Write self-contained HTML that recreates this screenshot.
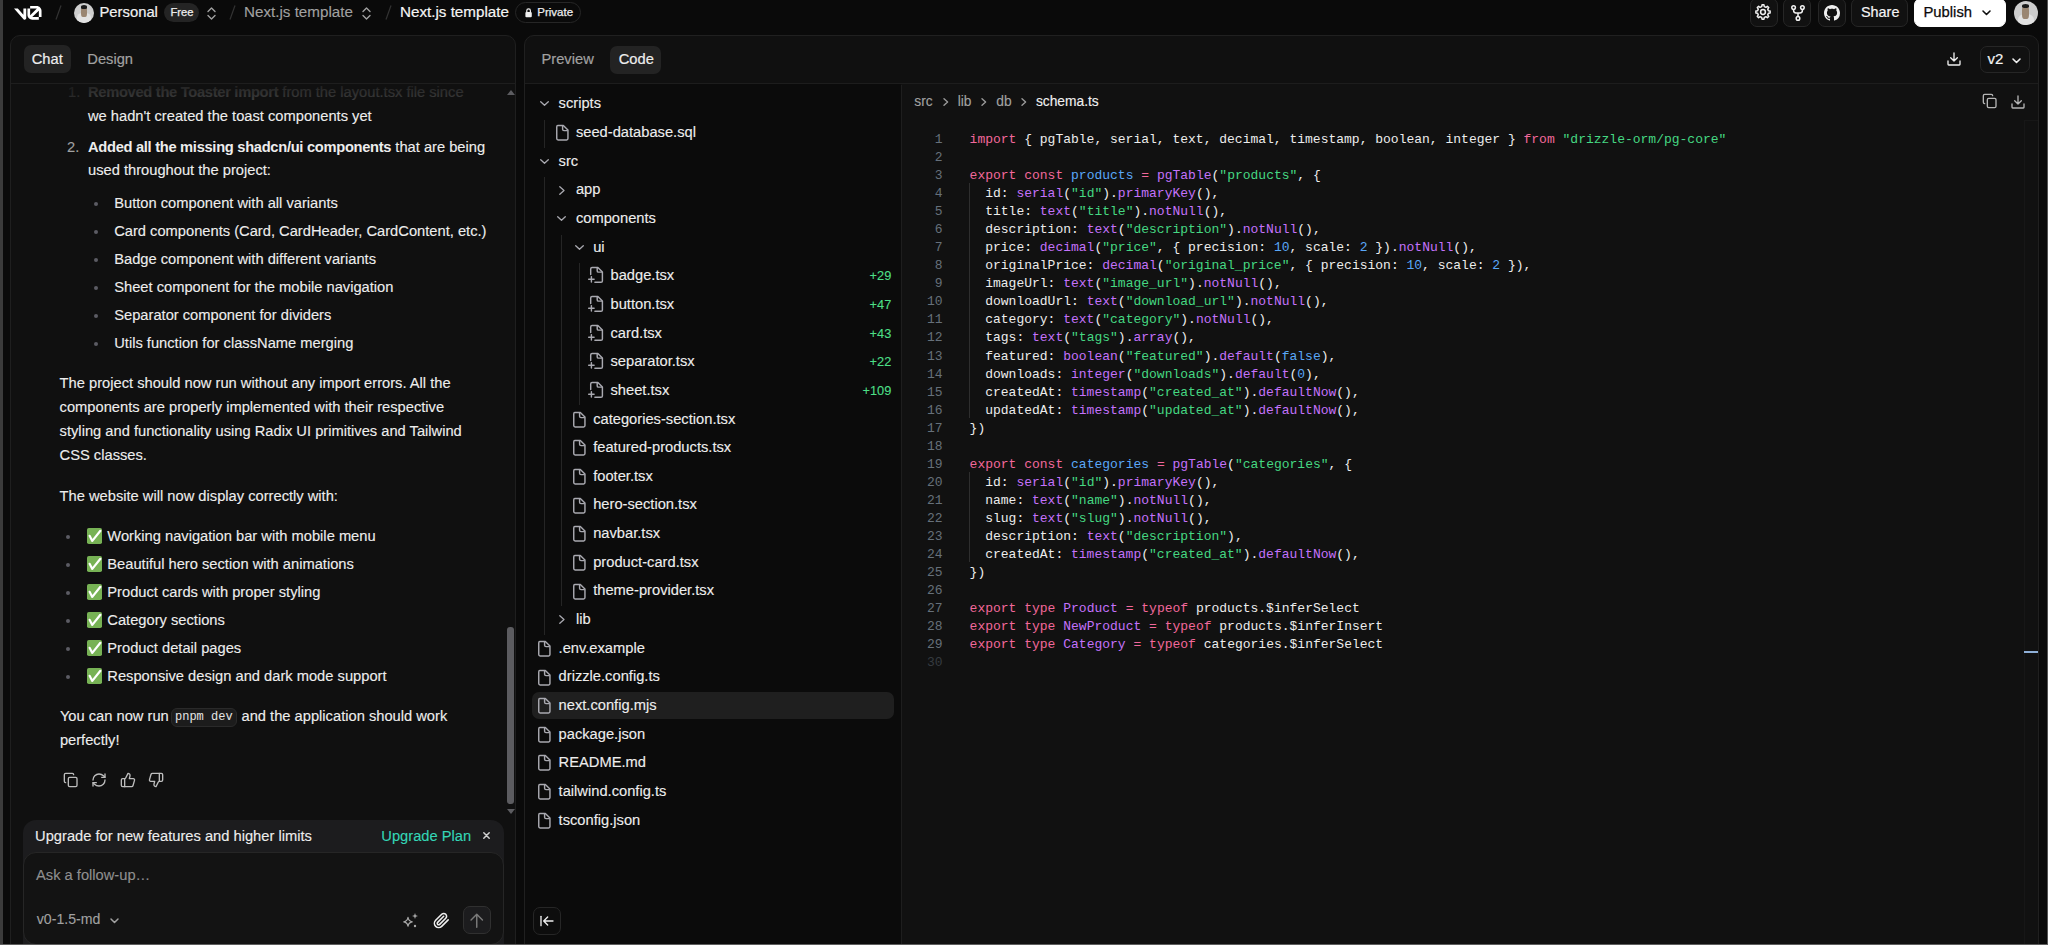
<!DOCTYPE html>
<html><head><meta charset="utf-8">
<style>
*{box-sizing:border-box;margin:0;padding:0}
html,body{width:2048px;height:945px;overflow:hidden;background:#0a0a0a;font-family:"Liberation Sans",sans-serif;color:#ededed}
.a{position:absolute;white-space:pre}
svg{position:absolute;overflow:visible}
b{-webkit-text-stroke:0 !important}
.hb{position:absolute;top:-2px;height:28.5px;border:1px solid #262626;background:#111;border-radius:7px}
</style></head><body>

<svg style="left:14px;top:5.5px;" width="27.6" height="13.8" viewBox="0 0 40 20"><path fill="#fff" d="M23.3919 0H32.9188C36.7819 0 39.9136 3.13165 39.9136 6.99475V16.0805H36.0006V6.99475C36.0006 6.90167 35.9969 6.80925 35.9898 6.71766L26.4628 16.079C26.4949 16.08 26.5272 16.0805 26.5595 16.0805H36.0006V19.7762H26.5595C22.6964 19.7762 19.4788 16.6139 19.4788 12.7508V3.68923H23.3919V12.7508C23.3919 12.9253 23.4054 13.0977 23.4316 13.2668L33.1682 3.6995C33.0861 3.6927 33.003 3.68923 32.9188 3.68923H23.3919V0Z"/><path fill="#fff" d="M13.7688 19.0956L0 3.68759H5.53933L13.6231 12.7337V3.68759H17.7535V17.5746C17.7535 19.6705 15.1654 20.6584 13.7688 19.0956Z"/></svg>
<svg style="left:55px;top:5px;" width="7" height="15" viewBox="0 0 7 15"><path d="M6 0.5 L1 14.5" stroke="#333" stroke-width="1.2"/></svg>
<div class="a" style="left:74px;top:2.5px;width:20px;height:20px;border-radius:50%;overflow:hidden;background:#cdcdcd"><div style="position:absolute;left:3.333333333333333px;top:10.833333333333334px;width:13.333333333333334px;height:11.666666666666668px;border-radius:40% 40% 0 0;background:#e2e2e2"></div><div style="position:absolute;left:7.333333333333333px;top:4.583333333333333px;width:5.333333333333334px;height:10.0px;border-radius:35%;background:#9a8672;filter:blur(0.3px)"></div><div style="position:absolute;left:6.833333333333334px;top:2.5px;width:6.333333333333333px;height:3.5000000000000004px;border-radius:50% 50% 30% 30%;background:#1a1a1a"></div></div>
<div class="a" style="left:99.5px;top:2.3000000000000007px;font-family:'Liberation Sans',sans-serif;font-size:14.8px;line-height:20px;color:#f2f2f2;font-weight:400;letter-spacing:0px;-webkit-text-stroke:0.2px #f2f2f2">Personal</div>
<div class="a" style="left:164px;top:3px;width:35px;height:19px;border-radius:10px;background:#242424"></div>
<div class="a" style="left:170.4px;top:3.5999999999999996px;font-family:'Liberation Sans',sans-serif;font-size:11.2px;line-height:16px;color:#ededed;font-weight:400;letter-spacing:0px;-webkit-text-stroke:0.25px #ededed">Free</div>
<svg style="left:206.5px;top:6.5px;" width="9" height="13" viewBox="0 0 9 13"><path d="M1 4.5 L4.5 1 L8 4.5 M1 8.5 L4.5 12 L8 8.5" stroke="#a1a1a1" stroke-width="1.4" fill="none" stroke-linecap="round" stroke-linejoin="round"/></svg>
<svg style="left:229px;top:5px;" width="7" height="15" viewBox="0 0 7 15"><path d="M6 0.5 L1 14.5" stroke="#333" stroke-width="1.2"/></svg>
<div class="a" style="left:244px;top:1.3000000000000007px;font-family:'Liberation Sans',sans-serif;font-size:15.2px;line-height:21px;color:#a1a1a1;font-weight:400;letter-spacing:0px;;-webkit-text-stroke:0.12px #a1a1a1">Next.js template</div>
<svg style="left:362px;top:6.5px;" width="9" height="13" viewBox="0 0 9 13"><path d="M1 4.5 L4.5 1 L8 4.5 M1 8.5 L4.5 12 L8 8.5" stroke="#a1a1a1" stroke-width="1.4" fill="none" stroke-linecap="round" stroke-linejoin="round"/></svg>
<svg style="left:384.5px;top:5px;" width="7" height="15" viewBox="0 0 7 15"><path d="M6 0.5 L1 14.5" stroke="#333" stroke-width="1.2"/></svg>
<div class="a" style="left:400px;top:1.3000000000000007px;font-family:'Liberation Sans',sans-serif;font-size:15.2px;line-height:21px;color:#f5f5f5;font-weight:400;letter-spacing:0px;-webkit-text-stroke:0.2px #f5f5f5">Next.js template</div>
<div class="a" style="left:515px;top:2px;width:66px;height:21px;border-radius:11px;border:1px solid #262626"></div>
<svg style="left:525px;top:7.8px;" width="7.2" height="9.5" viewBox="0 0 8 11"><path d="M1.9 4.6 V3.2 A2.1 2.1 0 0 1 6.1 3.2 V4.6" stroke="#f0f0f0" stroke-width="1.4" fill="none"/><rect x="0.3" y="4.6" width="7.4" height="6.2" rx="1.2" fill="#f0f0f0"/></svg>
<div class="a" style="left:537.3px;top:3.5999999999999996px;font-family:'Liberation Sans',sans-serif;font-size:11.5px;line-height:16px;color:#ededed;font-weight:400;letter-spacing:0px;-webkit-text-stroke:0.25px #ededed">Private</div>
<div class="hb" style="left:1750px;width:28px"></div>
<svg style="left:1754px;top:3.4px;" width="18" height="18" viewBox="0 0 24 24"><path d="M10.27 4.80 L10.72 2.49 L13.28 2.49 L13.73 4.80 L15.87 5.69 L17.82 4.37 L19.63 6.18 L18.31 8.13 L19.20 10.27 L21.51 10.72 L21.51 13.28 L19.20 13.73 L18.31 15.87 L19.63 17.82 L17.82 19.63 L15.87 18.31 L13.73 19.20 L13.28 21.51 L10.72 21.51 L10.27 19.20 L8.13 18.31 L6.18 19.63 L4.37 17.82 L5.69 15.87 L4.80 13.73 L2.49 13.28 L2.49 10.72 L4.80 10.27 L5.69 8.13 L4.37 6.18 L6.18 4.37 L8.13 5.69Z" stroke="#f0f0f0" stroke-width="2" fill="none" stroke-linejoin="round"/><circle cx="12" cy="12" r="3.2" stroke="#f0f0f0" stroke-width="2" fill="none"/></svg>
<div class="hb" style="left:1783px;width:28px"></div>
<svg style="left:1791px;top:5px;" width="14" height="16" viewBox="0 0 14 16"><circle cx="2.6" cy="2.6" r="1.8" stroke="#f0f0f0" stroke-width="1.5" fill="none"/><circle cx="11.4" cy="2.6" r="1.8" stroke="#f0f0f0" stroke-width="1.5" fill="none"/><circle cx="7" cy="13.4" r="1.8" stroke="#f0f0f0" stroke-width="1.5" fill="none"/><path d="M2.6 4.4 V5.6 Q2.6 8 5 8 H9 Q11.4 8 11.4 5.6 V4.4 M7 8 V11.6" stroke="#f0f0f0" stroke-width="1.5" fill="none"/></svg>
<div class="hb" style="left:1818px;width:28px"></div>
<svg style="left:1824px;top:5px;" width="16" height="16" viewBox="0 0 16 16"><path fill="#f0f0f0" d="M8 0C3.58 0 0 3.58 0 8c0 3.54 2.29 6.53 5.47 7.59.4.07.55-.17.55-.38 0-.19-.01-.82-.01-1.49-2.01.37-2.53-.49-2.69-.94-.09-.23-.48-.94-.82-1.13-.28-.15-.68-.52-.01-.53.63-.01 1.080.58 1.23.82.72 1.21 1.87.87 2.33.66.07-.52.28-.87.51-1.07-1.78-.2-3.64-.89-3.64-3.95 0-.87.31-1.59.82-2.15-.08-.2-.36-1.02.08-2.12 0 0 .67-.21 2.2.82.64-.18 1.32-.27 2-.27.68 0 1.36.09 2 .27 1.53-1.04 2.2-.82 2.2-.82.44 1.1.16 1.92.08 2.12.51.56.82 1.27.82 2.15 0 3.07-1.87 3.75-3.65 3.95.29.25.54.73.54 1.48 0 1.07-.01 1.93-.01 2.2 0 .21.15.46.55.38A8.013 8.013 0 0016 8c0-4.42-3.58-8-8-8z"/></svg>
<div class="hb" style="left:1851px;width:57px"></div>
<div class="a" style="left:1861px;top:2.3000000000000007px;font-family:'Liberation Sans',sans-serif;font-size:14.4px;line-height:20px;color:#f5f5f5;font-weight:400;letter-spacing:0px;-webkit-text-stroke:0.2px #f5f5f5">Share</div>
<div class="hb" style="left:1914px;width:92px;background:#fff;border-color:#fff"></div>
<div class="a" style="left:1923.5px;top:2.3000000000000007px;font-family:'Liberation Sans',sans-serif;font-size:14.8px;line-height:20px;color:#0a0a0a;font-weight:400;letter-spacing:0px;-webkit-text-stroke:0.25px #0a0a0a">Publish</div>
<svg style="left:1982px;top:10px;" width="9" height="6" viewBox="0 0 9 6"><path d="M1 1 L4.5 4.5 L8 1" stroke="#111" stroke-width="1.6" fill="none" stroke-linecap="round" stroke-linejoin="round"/></svg>
<div class="a" style="left:2013.5px;top:0.9000000000000004px;width:24.2px;height:24.2px;border-radius:50%;overflow:hidden;background:#cdcdcd"><div style="position:absolute;left:4.033333333333333px;top:13.108333333333333px;width:16.133333333333333px;height:14.116666666666667px;border-radius:40% 40% 0 0;background:#e2e2e2"></div><div style="position:absolute;left:8.873333333333333px;top:5.545833333333333px;width:6.453333333333333px;height:12.1px;border-radius:35%;background:#9a8672;filter:blur(0.3px)"></div><div style="position:absolute;left:8.268333333333333px;top:3.0250000000000004px;width:7.663333333333333px;height:4.235px;border-radius:50% 50% 30% 30%;background:#1a1a1a"></div></div>
<div class="a" style="left:10px;top:34.5px;width:506px;height:920px;border:1px solid #1f1f1f;border-radius:10px;background:#101010"></div>
<div class="a" style="left:524px;top:34.5px;width:1515px;height:920px;border:1px solid #202020;border-radius:10px;background:#101010"></div>
<div class="a" style="left:23.5px;top:45px;width:47px;height:28px;border-radius:7px;background:#232323"></div>
<div class="a" style="left:31.7px;top:48.9px;font-family:'Liberation Sans',sans-serif;font-size:14.7px;line-height:20px;color:#ededed;font-weight:400;letter-spacing:0px;-webkit-text-stroke:0.2px #ededed">Chat</div>
<div class="a" style="left:87.3px;top:48.9px;font-family:'Liberation Sans',sans-serif;font-size:14.7px;line-height:20px;color:#a1a1a1;font-weight:400;letter-spacing:0px;-webkit-text-stroke:0.2px #a1a1a1">Design</div>
<div class="a" style="left:11px;top:82.5px;width:505px;height:1px;background:#1e1e1e"></div>
<div class="a" style="left:68px;top:81.7px;font-family:'Liberation Sans',sans-serif;font-size:14.7px;line-height:20px;color:#a1a1a1;font-weight:400;letter-spacing:0px;;-webkit-text-stroke:0.12px #a1a1a1">1.</div>
<div class="a" style="left:88px;top:81.7px;font-family:'Liberation Sans',sans-serif;font-size:14.7px;line-height:20px;color:#ededed;font-weight:400;letter-spacing:0px;;-webkit-text-stroke:0.12px #ededed"><b style="letter-spacing:-0.3px">Removed the Toaster import</b> from the layout.tsx file since</div>
<div class="a" style="left:11px;top:83.5px;width:490px;height:21px;background:linear-gradient(rgba(16,16,16,0.93) 0%,rgba(16,16,16,0.8) 75%,rgba(16,16,16,0.0) 100%)"></div>
<div class="a" style="left:88px;top:105.7px;font-family:'Liberation Sans',sans-serif;font-size:14.7px;line-height:20px;color:#ededed;font-weight:400;letter-spacing:0px;;-webkit-text-stroke:0.12px #ededed">we hadn&#x27;t created the toast components yet</div>
<div class="a" style="left:67.1px;top:136.7px;font-family:'Liberation Sans',sans-serif;font-size:14.7px;line-height:20px;color:#a1a1a1;font-weight:400;letter-spacing:0px;;-webkit-text-stroke:0.12px #a1a1a1">2.</div>
<div class="a" style="left:88px;top:136.7px;font-family:'Liberation Sans',sans-serif;font-size:14.7px;line-height:20px;color:#ededed;font-weight:400;letter-spacing:0px;;-webkit-text-stroke:0.12px #ededed"><b style="letter-spacing:-0.3px">Added all the missing shadcn/ui components</b> that are being</div>
<div class="a" style="left:88px;top:160.4px;font-family:'Liberation Sans',sans-serif;font-size:14.7px;line-height:20px;color:#ededed;font-weight:400;letter-spacing:0px;;-webkit-text-stroke:0.12px #ededed">used throughout the project:</div>
<div class="a" style="left:93.8px;top:201.89999999999998px;width:4.3px;height:4.3px;border-radius:50%;background:#5c5c64"></div>
<div class="a" style="left:114.2px;top:193.2px;font-family:'Liberation Sans',sans-serif;font-size:14.7px;line-height:20px;color:#ededed;font-weight:400;letter-spacing:0px;;-webkit-text-stroke:0.12px #ededed">Button component with all variants</div>
<div class="a" style="left:93.8px;top:229.89999999999998px;width:4.3px;height:4.3px;border-radius:50%;background:#5c5c64"></div>
<div class="a" style="left:114.2px;top:221.2px;font-family:'Liberation Sans',sans-serif;font-size:14.7px;line-height:20px;color:#ededed;font-weight:400;letter-spacing:0px;;-webkit-text-stroke:0.12px #ededed">Card components (Card, CardHeader, CardContent, etc.)</div>
<div class="a" style="left:93.8px;top:257.9px;width:4.3px;height:4.3px;border-radius:50%;background:#5c5c64"></div>
<div class="a" style="left:114.2px;top:249.2px;font-family:'Liberation Sans',sans-serif;font-size:14.7px;line-height:20px;color:#ededed;font-weight:400;letter-spacing:0px;;-webkit-text-stroke:0.12px #ededed">Badge component with different variants</div>
<div class="a" style="left:93.8px;top:285.9px;width:4.3px;height:4.3px;border-radius:50%;background:#5c5c64"></div>
<div class="a" style="left:114.2px;top:277.2px;font-family:'Liberation Sans',sans-serif;font-size:14.7px;line-height:20px;color:#ededed;font-weight:400;letter-spacing:0px;;-webkit-text-stroke:0.12px #ededed">Sheet component for the mobile navigation</div>
<div class="a" style="left:93.8px;top:313.9px;width:4.3px;height:4.3px;border-radius:50%;background:#5c5c64"></div>
<div class="a" style="left:114.2px;top:305.2px;font-family:'Liberation Sans',sans-serif;font-size:14.7px;line-height:20px;color:#ededed;font-weight:400;letter-spacing:0px;;-webkit-text-stroke:0.12px #ededed">Separator component for dividers</div>
<div class="a" style="left:93.8px;top:341.9px;width:4.3px;height:4.3px;border-radius:50%;background:#5c5c64"></div>
<div class="a" style="left:114.2px;top:333.2px;font-family:'Liberation Sans',sans-serif;font-size:14.7px;line-height:20px;color:#ededed;font-weight:400;letter-spacing:0px;;-webkit-text-stroke:0.12px #ededed">Utils function for className merging</div>
<div class="a" style="left:59.6px;top:373.3px;font-family:'Liberation Sans',sans-serif;font-size:14.7px;line-height:20px;color:#ededed;font-weight:400;letter-spacing:0px;;-webkit-text-stroke:0.12px #ededed">The project should now run without any import errors. All the</div>
<div class="a" style="left:59.6px;top:397.3px;font-family:'Liberation Sans',sans-serif;font-size:14.7px;line-height:20px;color:#ededed;font-weight:400;letter-spacing:0px;;-webkit-text-stroke:0.12px #ededed">components are properly implemented with their respective</div>
<div class="a" style="left:59.6px;top:421.3px;font-family:'Liberation Sans',sans-serif;font-size:14.7px;line-height:20px;color:#ededed;font-weight:400;letter-spacing:0px;;-webkit-text-stroke:0.12px #ededed">styling and functionality using Radix UI primitives and Tailwind</div>
<div class="a" style="left:59.6px;top:445.3px;font-family:'Liberation Sans',sans-serif;font-size:14.7px;line-height:20px;color:#ededed;font-weight:400;letter-spacing:0px;;-webkit-text-stroke:0.12px #ededed">CSS classes.</div>
<div class="a" style="left:59.6px;top:485.6px;font-family:'Liberation Sans',sans-serif;font-size:14.7px;line-height:20px;color:#ededed;font-weight:400;letter-spacing:0px;;-webkit-text-stroke:0.12px #ededed">The website will now display correctly with:</div>
<div class="a" style="left:65.7px;top:534.5px;width:4.3px;height:4.3px;border-radius:50%;background:#5c5c64"></div>
<div class="a" style="left:86.7px;top:527.9px;width:15.8px;height:16px;border-radius:1.8px;background:#77b255"></div>
<svg style="left:86.7px;top:527.9px;" width="16" height="16" viewBox="0 0 16 16"><path d="M2.6 7.8 L5.3 12.9 L13.4 2.8" stroke="#fff" stroke-width="2.2" fill="none" stroke-linecap="round" stroke-linejoin="round"/></svg>
<div class="a" style="left:107.3px;top:525.5px;font-family:'Liberation Sans',sans-serif;font-size:14.7px;line-height:20px;color:#ededed;font-weight:400;letter-spacing:0px;;-webkit-text-stroke:0.12px #ededed">Working navigation bar with mobile menu</div>
<div class="a" style="left:65.7px;top:562.5px;width:4.3px;height:4.3px;border-radius:50%;background:#5c5c64"></div>
<div class="a" style="left:86.7px;top:555.9px;width:15.8px;height:16px;border-radius:1.8px;background:#77b255"></div>
<svg style="left:86.7px;top:555.9px;" width="16" height="16" viewBox="0 0 16 16"><path d="M2.6 7.8 L5.3 12.9 L13.4 2.8" stroke="#fff" stroke-width="2.2" fill="none" stroke-linecap="round" stroke-linejoin="round"/></svg>
<div class="a" style="left:107.3px;top:553.5px;font-family:'Liberation Sans',sans-serif;font-size:14.7px;line-height:20px;color:#ededed;font-weight:400;letter-spacing:0px;;-webkit-text-stroke:0.12px #ededed">Beautiful hero section with animations</div>
<div class="a" style="left:65.7px;top:590.5px;width:4.3px;height:4.3px;border-radius:50%;background:#5c5c64"></div>
<div class="a" style="left:86.7px;top:583.9px;width:15.8px;height:16px;border-radius:1.8px;background:#77b255"></div>
<svg style="left:86.7px;top:583.9px;" width="16" height="16" viewBox="0 0 16 16"><path d="M2.6 7.8 L5.3 12.9 L13.4 2.8" stroke="#fff" stroke-width="2.2" fill="none" stroke-linecap="round" stroke-linejoin="round"/></svg>
<div class="a" style="left:107.3px;top:581.5px;font-family:'Liberation Sans',sans-serif;font-size:14.7px;line-height:20px;color:#ededed;font-weight:400;letter-spacing:0px;;-webkit-text-stroke:0.12px #ededed">Product cards with proper styling</div>
<div class="a" style="left:65.7px;top:618.5px;width:4.3px;height:4.3px;border-radius:50%;background:#5c5c64"></div>
<div class="a" style="left:86.7px;top:611.9px;width:15.8px;height:16px;border-radius:1.8px;background:#77b255"></div>
<svg style="left:86.7px;top:611.9px;" width="16" height="16" viewBox="0 0 16 16"><path d="M2.6 7.8 L5.3 12.9 L13.4 2.8" stroke="#fff" stroke-width="2.2" fill="none" stroke-linecap="round" stroke-linejoin="round"/></svg>
<div class="a" style="left:107.3px;top:609.5px;font-family:'Liberation Sans',sans-serif;font-size:14.7px;line-height:20px;color:#ededed;font-weight:400;letter-spacing:0px;;-webkit-text-stroke:0.12px #ededed">Category sections</div>
<div class="a" style="left:65.7px;top:646.5px;width:4.3px;height:4.3px;border-radius:50%;background:#5c5c64"></div>
<div class="a" style="left:86.7px;top:639.9px;width:15.8px;height:16px;border-radius:1.8px;background:#77b255"></div>
<svg style="left:86.7px;top:639.9px;" width="16" height="16" viewBox="0 0 16 16"><path d="M2.6 7.8 L5.3 12.9 L13.4 2.8" stroke="#fff" stroke-width="2.2" fill="none" stroke-linecap="round" stroke-linejoin="round"/></svg>
<div class="a" style="left:107.3px;top:637.5px;font-family:'Liberation Sans',sans-serif;font-size:14.7px;line-height:20px;color:#ededed;font-weight:400;letter-spacing:0px;;-webkit-text-stroke:0.12px #ededed">Product detail pages</div>
<div class="a" style="left:65.7px;top:674.5px;width:4.3px;height:4.3px;border-radius:50%;background:#5c5c64"></div>
<div class="a" style="left:86.7px;top:667.9px;width:15.8px;height:16px;border-radius:1.8px;background:#77b255"></div>
<svg style="left:86.7px;top:667.9px;" width="16" height="16" viewBox="0 0 16 16"><path d="M2.6 7.8 L5.3 12.9 L13.4 2.8" stroke="#fff" stroke-width="2.2" fill="none" stroke-linecap="round" stroke-linejoin="round"/></svg>
<div class="a" style="left:107.3px;top:665.5px;font-family:'Liberation Sans',sans-serif;font-size:14.7px;line-height:20px;color:#ededed;font-weight:400;letter-spacing:0px;;-webkit-text-stroke:0.12px #ededed">Responsive design and dark mode support</div>
<div class="a" style="left:59.9px;top:705.8px;font-family:'Liberation Sans',sans-serif;font-size:14.7px;line-height:20px;color:#ededed;font-weight:400;letter-spacing:0px;;-webkit-text-stroke:0.12px #ededed">You can now run</div>
<div class="a" style="left:170.5px;top:707.5px;width:66.3px;height:19.5px;border-radius:6px;background:#1c1c1c;border:1px solid #2a2a2a"></div>
<div class="a" style="left:175px;top:708.3px;font-family:'Liberation Mono',monospace;font-size:12px;line-height:18px;color:#e5e5e5;font-weight:400;letter-spacing:0px;">pnpm dev</div>
<div class="a" style="left:241.5px;top:705.8px;font-family:'Liberation Sans',sans-serif;font-size:14.7px;line-height:20px;color:#ededed;font-weight:400;letter-spacing:0px;;-webkit-text-stroke:0.12px #ededed">and the application should work</div>
<div class="a" style="left:59.9px;top:729.7px;font-family:'Liberation Sans',sans-serif;font-size:14.7px;line-height:20px;color:#ededed;font-weight:400;letter-spacing:0px;;-webkit-text-stroke:0.12px #ededed">perfectly!</div>
<svg style="left:63px;top:772px;" width="16" height="16" viewBox="0 0 24 24"><rect x="8" y="8" width="13" height="14" rx="2" stroke="#bdbdbd" stroke-width="2" fill="none" stroke-linecap="round" stroke-linejoin="round"/><path d="M4 16c-1.1 0-2-.9-2-2V4c0-1.1.9-2 2-2h10c1.1 0 2 .9 2 2" stroke="#bdbdbd" stroke-width="2" fill="none" stroke-linecap="round" stroke-linejoin="round"/></svg>
<svg style="left:91px;top:772px;" width="16" height="16" viewBox="0 0 24 24"><path d="M3 12a9 9 0 0 1 9-9 9.75 9.75 0 0 1 6.74 2.74L21 8" stroke="#bdbdbd" stroke-width="2" fill="none" stroke-linecap="round" stroke-linejoin="round"/><path d="M21 3v5h-5" stroke="#bdbdbd" stroke-width="2" fill="none" stroke-linecap="round" stroke-linejoin="round"/><path d="M21 12a9 9 0 0 1-9 9 9.75 9.75 0 0 1-6.74-2.74L3 16" stroke="#bdbdbd" stroke-width="2" fill="none" stroke-linecap="round" stroke-linejoin="round"/><path d="M8 16H3v5" stroke="#bdbdbd" stroke-width="2" fill="none" stroke-linecap="round" stroke-linejoin="round"/></svg>
<svg style="left:119.7px;top:772px;" width="16" height="16" viewBox="0 0 24 24"><path d="M7 10v12" stroke="#bdbdbd" stroke-width="2" fill="none" stroke-linecap="round" stroke-linejoin="round"/><path d="M15 5.88 14 10h5.83a2 2 0 0 1 1.92 2.56l-2.33 8A2 2 0 0 1 17.5 22H4a2 2 0 0 1-2-2v-8a2 2 0 0 1 2-2h2.76a2 2 0 0 0 1.79-1.11L12 2a3.13 3.13 0 0 1 3 3.88Z" stroke="#bdbdbd" stroke-width="2" fill="none" stroke-linecap="round" stroke-linejoin="round"/></svg>
<svg style="left:147.8px;top:772px;" width="16" height="16" viewBox="0 0 24 24"><path d="M17 14V2" stroke="#bdbdbd" stroke-width="2" fill="none" stroke-linecap="round" stroke-linejoin="round"/><path d="M9 18.12 10 14H4.17a2 2 0 0 1-1.92-2.56l2.33-8A2 2 0 0 1 6.5 2H20a2 2 0 0 1 2 2v8a2 2 0 0 1-2 2h-2.76a2 2 0 0 0-1.79 1.11L12 22a3.13 3.13 0 0 1-3-3.88Z" stroke="#bdbdbd" stroke-width="2" fill="none" stroke-linecap="round" stroke-linejoin="round"/></svg>
<div class="a" style="left:507.3px;top:626.8px;width:6.3px;height:177.6px;border-radius:3px;background:#5c5c60"></div>
<svg style="left:506.5px;top:89.5px;" width="8" height="5" viewBox="0 0 8 5"><path d="M0 5 L4 0 L8 5Z" fill="#5c5c60"/></svg>
<svg style="left:507px;top:808.5px;" width="8" height="5" viewBox="0 0 8 5"><path d="M0 0 L4 5 L8 0Z" fill="#5c5c60"/></svg>
<div class="a" style="left:23px;top:819.8px;width:481px;height:140px;border-radius:13px;background:#1c1c1e"></div>
<div class="a" style="left:35.1px;top:825.5px;font-family:'Liberation Sans',sans-serif;font-size:14.7px;line-height:20px;color:#ededed;font-weight:400;letter-spacing:0px;;-webkit-text-stroke:0.12px #ededed">Upgrade for new features and higher limits</div>
<div class="a" style="left:381.3px;top:825.5px;font-family:'Liberation Sans',sans-serif;font-size:14.7px;line-height:20px;color:#34d6b6;font-weight:400;letter-spacing:0px;;-webkit-text-stroke:0.12px #34d6b6">Upgrade Plan</div>
<svg style="left:482.7px;top:832.2px;" width="7" height="7" viewBox="0 0 7 7"><path d="M0.8 0.8 L6.2 6.2 M6.2 0.8 L0.8 6.2" stroke="#d0d0d0" stroke-width="1.5" stroke-linecap="round"/></svg>
<div class="a" style="left:23px;top:852px;width:481px;height:92.5px;border-radius:13px;background:#131313;border:1px solid #262626"></div>
<div class="a" style="left:36px;top:864.6px;font-family:'Liberation Sans',sans-serif;font-size:14.7px;line-height:20px;color:#8f8f8f;font-weight:400;letter-spacing:0px;;-webkit-text-stroke:0.12px #8f8f8f">Ask a follow-up…</div>
<div class="a" style="left:36.8px;top:909.3px;font-family:'Liberation Sans',sans-serif;font-size:14.1px;line-height:20px;color:#a1a1a1;font-weight:400;letter-spacing:0px;;-webkit-text-stroke:0.12px #a1a1a1">v0-1.5-md</div>
<svg style="left:109.5px;top:917.5px;" width="9" height="6" viewBox="0 0 9 6"><path d="M1 1 L4.5 4.5 L8 1" stroke="#a1a1a1" stroke-width="1.5" fill="none" stroke-linecap="round" stroke-linejoin="round"/></svg>
<svg style="left:402px;top:912px;" width="17" height="17" viewBox="0 0 17 17"><path d="M6 5.5 Q6.6 9.2 10.2 9.8 Q6.6 10.4 6 14.1 Q5.4 10.4 1.8 9.8 Q5.4 9.2 6 5.5Z" stroke="#a8a8a8" stroke-width="1.3" fill="none" stroke-linejoin="round"/><path d="M13 1 L13.8 3.2 L16 4 L13.8 4.8 L13 7 L12.2 4.8 L10 4 L12.2 3.2Z" fill="#a8a8a8"/><circle cx="13" cy="14" r="1.2" fill="#a8a8a8"/></svg>
<svg style="left:433px;top:912px;" width="17" height="17" viewBox="0 0 24 24"><path d="m21.44 11.05-9.19 9.19a6 6 0 0 1-8.49-8.49l8.57-8.57A4 4 0 1 1 18 8.84l-8.59 8.57a2 2 0 0 1-2.83-2.83l8.49-8.48" stroke="#efefef" stroke-width="2.2" fill="none" stroke-linecap="round" stroke-linejoin="round"/></svg>
<div class="a" style="left:462.5px;top:905.8px;width:28.5px;height:28.5px;border-radius:7px;background:#1c1c1e;border:1.2px solid #303030"></div>
<svg style="left:467.2px;top:910.5px;" width="19.5" height="19.5" viewBox="0 0 24 24"><path d="m5 11 7-7 7 7M12 20V4" stroke="#7a7a7a" stroke-width="1.8" fill="none" stroke-linecap="round" stroke-linejoin="round"/></svg>
<div class="a" style="left:541.5px;top:49.2px;font-family:'Liberation Sans',sans-serif;font-size:14.7px;line-height:20px;color:#a1a1a1;font-weight:400;letter-spacing:0px;-webkit-text-stroke:0.2px #a1a1a1">Preview</div>
<div class="a" style="left:610.4px;top:46px;width:50.6px;height:27.5px;border-radius:7px;background:#232323"></div>
<div class="a" style="left:618.7px;top:49.2px;font-family:'Liberation Sans',sans-serif;font-size:14.7px;line-height:20px;color:#ededed;font-weight:400;letter-spacing:0px;-webkit-text-stroke:0.2px #ededed">Code</div>
<div class="a" style="left:525px;top:84px;width:1513px;height:870px;background:#0b0b0b"></div>
<div class="a" style="left:525px;top:83.2px;width:1513px;height:1.2px;background:#1d1d1d"></div>
<svg style="left:1946px;top:51px;" width="16" height="16" viewBox="0 0 24 24"><path d="M12 3v12M7 10l5 5 5-5" stroke="#f0f0f0" stroke-width="2" fill="none" stroke-linecap="round" stroke-linejoin="round"/><path d="M3 15v5a1 1 0 0 0 1 1h16a1 1 0 0 0 1-1v-5" stroke="#f0f0f0" stroke-width="2" fill="none" stroke-linecap="round" stroke-linejoin="round"/></svg>
<div class="a" style="left:1980px;top:46.4px;width:50px;height:27px;border-radius:7px;border:1px solid #262626;background:#111"></div>
<div class="a" style="left:1987.5px;top:48.400000000000006px;font-family:'Liberation Sans',sans-serif;font-size:15px;line-height:21px;color:#f5f5f5;font-weight:400;letter-spacing:0px;-webkit-text-stroke:0.2px #f5f5f5">v2</div>
<svg style="left:2011.5px;top:57.5px;" width="9" height="6" viewBox="0 0 9 6"><path d="M1 1 L4.5 4.5 L8 1" stroke="#f0f0f0" stroke-width="1.6" fill="none" stroke-linecap="round" stroke-linejoin="round"/></svg>
<div class="a" style="left:901px;top:84.4px;width:1137px;height:870px;background:#111"></div>
<div class="a" style="left:900.5px;top:84.5px;width:1px;height:870px;background:#1e1e1e"></div>
<div class="a" style="left:531.7px;top:691.776px;width:362.5px;height:27.3px;border-radius:7px;background:#1f1f1f"></div>
<div class="a" style="left:544.2px;top:119.95599999999999px;width:1px;height:27.599999999999994px;background:#252525"></div>
<div class="a" style="left:544.2px;top:177.26799999999997px;width:1px;height:457.44px;background:#252525"></div>
<div class="a" style="left:561.4px;top:234.57999999999998px;width:1px;height:371.47200000000004px;background:#252525"></div>
<div class="a" style="left:578.8px;top:263.236px;width:1px;height:142.22400000000005px;background:#252525"></div>
<svg style="left:540.0px;top:101.3px;" width="9" height="5" viewBox="0 0 9 5"><path d="M0.7 0.7 L4.5 4.3 L8.3 0.7" stroke="#a9a9b0" stroke-width="1.3" fill="none" stroke-linecap="round" stroke-linejoin="round"/></svg>
<div class="a" style="left:558.6px;top:93.3px;font-family:'Liberation Sans',sans-serif;font-size:14.7px;line-height:20px;color:#ededed;font-weight:400;letter-spacing:0px;;-webkit-text-stroke:0.12px #ededed">scripts</div>
<svg style="left:553.55px;top:124.05599999999998px;" width="16" height="17" viewBox="0 0 16 17"><path d="M9.3 1.5 H3.8 Q2.75 1.5 2.75 2.9 V14.6 Q2.75 16 4.1 16 H12.6 Q13.95 16 13.95 14.6 V6.1 Z" stroke="#a9a9b0" stroke-width="1.45" fill="none" stroke-linejoin="round"/><path d="M8.6 1.7 V5.2 Q8.6 6.6 10 6.6 H13.8" stroke="#a9a9b0" stroke-width="1.45" fill="none" stroke-linejoin="round"/></svg>
<div class="a" style="left:575.9px;top:121.95599999999999px;font-family:'Liberation Sans',sans-serif;font-size:14.7px;line-height:20px;color:#ededed;font-weight:400;letter-spacing:0px;;-webkit-text-stroke:0.12px #ededed">seed-database.sql</div>
<svg style="left:540.0px;top:158.612px;" width="9" height="5" viewBox="0 0 9 5"><path d="M0.7 0.7 L4.5 4.3 L8.3 0.7" stroke="#a9a9b0" stroke-width="1.3" fill="none" stroke-linecap="round" stroke-linejoin="round"/></svg>
<div class="a" style="left:558.6px;top:150.612px;font-family:'Liberation Sans',sans-serif;font-size:14.7px;line-height:20px;color:#ededed;font-weight:400;letter-spacing:0px;;-webkit-text-stroke:0.12px #ededed">src</div>
<svg style="left:558.9px;top:185.56799999999998px;" width="6" height="9" viewBox="0 0 6 9"><path d="M0.8 0.7 L5 4.5 L0.8 8.3" stroke="#a9a9b0" stroke-width="1.3" fill="none" stroke-linecap="round" stroke-linejoin="round"/></svg>
<div class="a" style="left:575.9px;top:179.26799999999997px;font-family:'Liberation Sans',sans-serif;font-size:14.7px;line-height:20px;color:#ededed;font-weight:400;letter-spacing:0px;;-webkit-text-stroke:0.12px #ededed">app</div>
<svg style="left:557.3px;top:215.92399999999998px;" width="9" height="5" viewBox="0 0 9 5"><path d="M0.7 0.7 L4.5 4.3 L8.3 0.7" stroke="#a9a9b0" stroke-width="1.3" fill="none" stroke-linecap="round" stroke-linejoin="round"/></svg>
<div class="a" style="left:575.9px;top:207.92399999999998px;font-family:'Liberation Sans',sans-serif;font-size:14.7px;line-height:20px;color:#ededed;font-weight:400;letter-spacing:0px;;-webkit-text-stroke:0.12px #ededed">components</div>
<svg style="left:574.6px;top:244.57999999999998px;" width="9" height="5" viewBox="0 0 9 5"><path d="M0.7 0.7 L4.5 4.3 L8.3 0.7" stroke="#a9a9b0" stroke-width="1.3" fill="none" stroke-linecap="round" stroke-linejoin="round"/></svg>
<div class="a" style="left:593.2px;top:236.57999999999998px;font-family:'Liberation Sans',sans-serif;font-size:14.7px;line-height:20px;color:#ededed;font-weight:400;letter-spacing:0px;;-webkit-text-stroke:0.12px #ededed">ui</div>
<svg style="left:588.0px;top:266.236px;" width="17" height="18" viewBox="0 0 17 18"><path d="M2.7 8.4 V2.9 Q2.7 1.5 4.1 1.5 H9.9 L14.4 6 V14.9 Q14.4 16.3 13 16.3 H6.9" stroke="#a9a9b0" stroke-width="1.45" fill="none" stroke-linejoin="round" stroke-linecap="round"/><path d="M9.2 1.7 V4.9 Q9.2 6.1 10.4 6.1 H14.2" stroke="#a9a9b0" stroke-width="1.45" fill="none" stroke-linejoin="round"/><path d="M0.7 13.3 H6.1 M3.4 10.6 V16" stroke="#a9a9b0" stroke-width="1.45" stroke-linecap="round"/></svg>
<div class="a" style="left:610.5px;top:265.236px;font-family:'Liberation Sans',sans-serif;font-size:14.7px;line-height:20px;color:#ededed;font-weight:400;letter-spacing:0px;;-webkit-text-stroke:0.12px #ededed">badge.tsx</div>
<div class="a" style="right:1156.7px;top:266.236px;font-family:'Liberation Sans',sans-serif;font-size:12.8px;line-height:19px;color:#4ddf86;font-weight:400;letter-spacing:0px;;-webkit-text-stroke:0.12px #4ddf86">+29</div>
<svg style="left:588.0px;top:294.892px;" width="17" height="18" viewBox="0 0 17 18"><path d="M2.7 8.4 V2.9 Q2.7 1.5 4.1 1.5 H9.9 L14.4 6 V14.9 Q14.4 16.3 13 16.3 H6.9" stroke="#a9a9b0" stroke-width="1.45" fill="none" stroke-linejoin="round" stroke-linecap="round"/><path d="M9.2 1.7 V4.9 Q9.2 6.1 10.4 6.1 H14.2" stroke="#a9a9b0" stroke-width="1.45" fill="none" stroke-linejoin="round"/><path d="M0.7 13.3 H6.1 M3.4 10.6 V16" stroke="#a9a9b0" stroke-width="1.45" stroke-linecap="round"/></svg>
<div class="a" style="left:610.5px;top:293.892px;font-family:'Liberation Sans',sans-serif;font-size:14.7px;line-height:20px;color:#ededed;font-weight:400;letter-spacing:0px;;-webkit-text-stroke:0.12px #ededed">button.tsx</div>
<div class="a" style="right:1156.7px;top:294.892px;font-family:'Liberation Sans',sans-serif;font-size:12.8px;line-height:19px;color:#4ddf86;font-weight:400;letter-spacing:0px;;-webkit-text-stroke:0.12px #4ddf86">+47</div>
<svg style="left:588.0px;top:323.548px;" width="17" height="18" viewBox="0 0 17 18"><path d="M2.7 8.4 V2.9 Q2.7 1.5 4.1 1.5 H9.9 L14.4 6 V14.9 Q14.4 16.3 13 16.3 H6.9" stroke="#a9a9b0" stroke-width="1.45" fill="none" stroke-linejoin="round" stroke-linecap="round"/><path d="M9.2 1.7 V4.9 Q9.2 6.1 10.4 6.1 H14.2" stroke="#a9a9b0" stroke-width="1.45" fill="none" stroke-linejoin="round"/><path d="M0.7 13.3 H6.1 M3.4 10.6 V16" stroke="#a9a9b0" stroke-width="1.45" stroke-linecap="round"/></svg>
<div class="a" style="left:610.5px;top:322.548px;font-family:'Liberation Sans',sans-serif;font-size:14.7px;line-height:20px;color:#ededed;font-weight:400;letter-spacing:0px;;-webkit-text-stroke:0.12px #ededed">card.tsx</div>
<div class="a" style="right:1156.7px;top:323.548px;font-family:'Liberation Sans',sans-serif;font-size:12.8px;line-height:19px;color:#4ddf86;font-weight:400;letter-spacing:0px;;-webkit-text-stroke:0.12px #4ddf86">+43</div>
<svg style="left:588.0px;top:352.204px;" width="17" height="18" viewBox="0 0 17 18"><path d="M2.7 8.4 V2.9 Q2.7 1.5 4.1 1.5 H9.9 L14.4 6 V14.9 Q14.4 16.3 13 16.3 H6.9" stroke="#a9a9b0" stroke-width="1.45" fill="none" stroke-linejoin="round" stroke-linecap="round"/><path d="M9.2 1.7 V4.9 Q9.2 6.1 10.4 6.1 H14.2" stroke="#a9a9b0" stroke-width="1.45" fill="none" stroke-linejoin="round"/><path d="M0.7 13.3 H6.1 M3.4 10.6 V16" stroke="#a9a9b0" stroke-width="1.45" stroke-linecap="round"/></svg>
<div class="a" style="left:610.5px;top:351.204px;font-family:'Liberation Sans',sans-serif;font-size:14.7px;line-height:20px;color:#ededed;font-weight:400;letter-spacing:0px;;-webkit-text-stroke:0.12px #ededed">separator.tsx</div>
<div class="a" style="right:1156.7px;top:352.204px;font-family:'Liberation Sans',sans-serif;font-size:12.8px;line-height:19px;color:#4ddf86;font-weight:400;letter-spacing:0px;;-webkit-text-stroke:0.12px #4ddf86">+22</div>
<svg style="left:588.0px;top:380.86px;" width="17" height="18" viewBox="0 0 17 18"><path d="M2.7 8.4 V2.9 Q2.7 1.5 4.1 1.5 H9.9 L14.4 6 V14.9 Q14.4 16.3 13 16.3 H6.9" stroke="#a9a9b0" stroke-width="1.45" fill="none" stroke-linejoin="round" stroke-linecap="round"/><path d="M9.2 1.7 V4.9 Q9.2 6.1 10.4 6.1 H14.2" stroke="#a9a9b0" stroke-width="1.45" fill="none" stroke-linejoin="round"/><path d="M0.7 13.3 H6.1 M3.4 10.6 V16" stroke="#a9a9b0" stroke-width="1.45" stroke-linecap="round"/></svg>
<div class="a" style="left:610.5px;top:379.86px;font-family:'Liberation Sans',sans-serif;font-size:14.7px;line-height:20px;color:#ededed;font-weight:400;letter-spacing:0px;;-webkit-text-stroke:0.12px #ededed">sheet.tsx</div>
<div class="a" style="right:1156.7px;top:380.86px;font-family:'Liberation Sans',sans-serif;font-size:12.8px;line-height:19px;color:#4ddf86;font-weight:400;letter-spacing:0px;;-webkit-text-stroke:0.12px #4ddf86">+109</div>
<svg style="left:570.85px;top:410.61600000000004px;" width="16" height="17" viewBox="0 0 16 17"><path d="M9.3 1.5 H3.8 Q2.75 1.5 2.75 2.9 V14.6 Q2.75 16 4.1 16 H12.6 Q13.95 16 13.95 14.6 V6.1 Z" stroke="#a9a9b0" stroke-width="1.45" fill="none" stroke-linejoin="round"/><path d="M8.6 1.7 V5.2 Q8.6 6.6 10 6.6 H13.8" stroke="#a9a9b0" stroke-width="1.45" fill="none" stroke-linejoin="round"/></svg>
<div class="a" style="left:593.2px;top:408.516px;font-family:'Liberation Sans',sans-serif;font-size:14.7px;line-height:20px;color:#ededed;font-weight:400;letter-spacing:0px;;-webkit-text-stroke:0.12px #ededed">categories-section.tsx</div>
<svg style="left:570.85px;top:439.272px;" width="16" height="17" viewBox="0 0 16 17"><path d="M9.3 1.5 H3.8 Q2.75 1.5 2.75 2.9 V14.6 Q2.75 16 4.1 16 H12.6 Q13.95 16 13.95 14.6 V6.1 Z" stroke="#a9a9b0" stroke-width="1.45" fill="none" stroke-linejoin="round"/><path d="M8.6 1.7 V5.2 Q8.6 6.6 10 6.6 H13.8" stroke="#a9a9b0" stroke-width="1.45" fill="none" stroke-linejoin="round"/></svg>
<div class="a" style="left:593.2px;top:437.17199999999997px;font-family:'Liberation Sans',sans-serif;font-size:14.7px;line-height:20px;color:#ededed;font-weight:400;letter-spacing:0px;;-webkit-text-stroke:0.12px #ededed">featured-products.tsx</div>
<svg style="left:570.85px;top:467.928px;" width="16" height="17" viewBox="0 0 16 17"><path d="M9.3 1.5 H3.8 Q2.75 1.5 2.75 2.9 V14.6 Q2.75 16 4.1 16 H12.6 Q13.95 16 13.95 14.6 V6.1 Z" stroke="#a9a9b0" stroke-width="1.45" fill="none" stroke-linejoin="round"/><path d="M8.6 1.7 V5.2 Q8.6 6.6 10 6.6 H13.8" stroke="#a9a9b0" stroke-width="1.45" fill="none" stroke-linejoin="round"/></svg>
<div class="a" style="left:593.2px;top:465.828px;font-family:'Liberation Sans',sans-serif;font-size:14.7px;line-height:20px;color:#ededed;font-weight:400;letter-spacing:0px;;-webkit-text-stroke:0.12px #ededed">footer.tsx</div>
<svg style="left:570.85px;top:496.584px;" width="16" height="17" viewBox="0 0 16 17"><path d="M9.3 1.5 H3.8 Q2.75 1.5 2.75 2.9 V14.6 Q2.75 16 4.1 16 H12.6 Q13.95 16 13.95 14.6 V6.1 Z" stroke="#a9a9b0" stroke-width="1.45" fill="none" stroke-linejoin="round"/><path d="M8.6 1.7 V5.2 Q8.6 6.6 10 6.6 H13.8" stroke="#a9a9b0" stroke-width="1.45" fill="none" stroke-linejoin="round"/></svg>
<div class="a" style="left:593.2px;top:494.484px;font-family:'Liberation Sans',sans-serif;font-size:14.7px;line-height:20px;color:#ededed;font-weight:400;letter-spacing:0px;;-webkit-text-stroke:0.12px #ededed">hero-section.tsx</div>
<svg style="left:570.85px;top:525.24px;" width="16" height="17" viewBox="0 0 16 17"><path d="M9.3 1.5 H3.8 Q2.75 1.5 2.75 2.9 V14.6 Q2.75 16 4.1 16 H12.6 Q13.95 16 13.95 14.6 V6.1 Z" stroke="#a9a9b0" stroke-width="1.45" fill="none" stroke-linejoin="round"/><path d="M8.6 1.7 V5.2 Q8.6 6.6 10 6.6 H13.8" stroke="#a9a9b0" stroke-width="1.45" fill="none" stroke-linejoin="round"/></svg>
<div class="a" style="left:593.2px;top:523.14px;font-family:'Liberation Sans',sans-serif;font-size:14.7px;line-height:20px;color:#ededed;font-weight:400;letter-spacing:0px;;-webkit-text-stroke:0.12px #ededed">navbar.tsx</div>
<svg style="left:570.85px;top:553.896px;" width="16" height="17" viewBox="0 0 16 17"><path d="M9.3 1.5 H3.8 Q2.75 1.5 2.75 2.9 V14.6 Q2.75 16 4.1 16 H12.6 Q13.95 16 13.95 14.6 V6.1 Z" stroke="#a9a9b0" stroke-width="1.45" fill="none" stroke-linejoin="round"/><path d="M8.6 1.7 V5.2 Q8.6 6.6 10 6.6 H13.8" stroke="#a9a9b0" stroke-width="1.45" fill="none" stroke-linejoin="round"/></svg>
<div class="a" style="left:593.2px;top:551.7959999999999px;font-family:'Liberation Sans',sans-serif;font-size:14.7px;line-height:20px;color:#ededed;font-weight:400;letter-spacing:0px;;-webkit-text-stroke:0.12px #ededed">product-card.tsx</div>
<svg style="left:570.85px;top:582.552px;" width="16" height="17" viewBox="0 0 16 17"><path d="M9.3 1.5 H3.8 Q2.75 1.5 2.75 2.9 V14.6 Q2.75 16 4.1 16 H12.6 Q13.95 16 13.95 14.6 V6.1 Z" stroke="#a9a9b0" stroke-width="1.45" fill="none" stroke-linejoin="round"/><path d="M8.6 1.7 V5.2 Q8.6 6.6 10 6.6 H13.8" stroke="#a9a9b0" stroke-width="1.45" fill="none" stroke-linejoin="round"/></svg>
<div class="a" style="left:593.2px;top:580.452px;font-family:'Liberation Sans',sans-serif;font-size:14.7px;line-height:20px;color:#ededed;font-weight:400;letter-spacing:0px;;-webkit-text-stroke:0.12px #ededed">theme-provider.tsx</div>
<svg style="left:558.9px;top:615.4079999999999px;" width="6" height="9" viewBox="0 0 6 9"><path d="M0.8 0.7 L5 4.5 L0.8 8.3" stroke="#a9a9b0" stroke-width="1.3" fill="none" stroke-linecap="round" stroke-linejoin="round"/></svg>
<div class="a" style="left:575.9px;top:609.108px;font-family:'Liberation Sans',sans-serif;font-size:14.7px;line-height:20px;color:#ededed;font-weight:400;letter-spacing:0px;;-webkit-text-stroke:0.12px #ededed">lib</div>
<svg style="left:536.25px;top:639.8639999999999px;" width="16" height="17" viewBox="0 0 16 17"><path d="M9.3 1.5 H3.8 Q2.75 1.5 2.75 2.9 V14.6 Q2.75 16 4.1 16 H12.6 Q13.95 16 13.95 14.6 V6.1 Z" stroke="#a9a9b0" stroke-width="1.45" fill="none" stroke-linejoin="round"/><path d="M8.6 1.7 V5.2 Q8.6 6.6 10 6.6 H13.8" stroke="#a9a9b0" stroke-width="1.45" fill="none" stroke-linejoin="round"/></svg>
<div class="a" style="left:558.6px;top:637.7639999999999px;font-family:'Liberation Sans',sans-serif;font-size:14.7px;line-height:20px;color:#ededed;font-weight:400;letter-spacing:0px;;-webkit-text-stroke:0.12px #ededed">.env.example</div>
<svg style="left:536.25px;top:668.52px;" width="16" height="17" viewBox="0 0 16 17"><path d="M9.3 1.5 H3.8 Q2.75 1.5 2.75 2.9 V14.6 Q2.75 16 4.1 16 H12.6 Q13.95 16 13.95 14.6 V6.1 Z" stroke="#a9a9b0" stroke-width="1.45" fill="none" stroke-linejoin="round"/><path d="M8.6 1.7 V5.2 Q8.6 6.6 10 6.6 H13.8" stroke="#a9a9b0" stroke-width="1.45" fill="none" stroke-linejoin="round"/></svg>
<div class="a" style="left:558.6px;top:666.42px;font-family:'Liberation Sans',sans-serif;font-size:14.7px;line-height:20px;color:#ededed;font-weight:400;letter-spacing:0px;;-webkit-text-stroke:0.12px #ededed">drizzle.config.ts</div>
<svg style="left:536.25px;top:697.1759999999999px;" width="16" height="17" viewBox="0 0 16 17"><path d="M9.3 1.5 H3.8 Q2.75 1.5 2.75 2.9 V14.6 Q2.75 16 4.1 16 H12.6 Q13.95 16 13.95 14.6 V6.1 Z" stroke="#a9a9b0" stroke-width="1.45" fill="none" stroke-linejoin="round"/><path d="M8.6 1.7 V5.2 Q8.6 6.6 10 6.6 H13.8" stroke="#a9a9b0" stroke-width="1.45" fill="none" stroke-linejoin="round"/></svg>
<div class="a" style="left:558.6px;top:695.0759999999999px;font-family:'Liberation Sans',sans-serif;font-size:14.7px;line-height:20px;color:#ededed;font-weight:400;letter-spacing:0px;;-webkit-text-stroke:0.12px #ededed">next.config.mjs</div>
<svg style="left:536.25px;top:725.832px;" width="16" height="17" viewBox="0 0 16 17"><path d="M9.3 1.5 H3.8 Q2.75 1.5 2.75 2.9 V14.6 Q2.75 16 4.1 16 H12.6 Q13.95 16 13.95 14.6 V6.1 Z" stroke="#a9a9b0" stroke-width="1.45" fill="none" stroke-linejoin="round"/><path d="M8.6 1.7 V5.2 Q8.6 6.6 10 6.6 H13.8" stroke="#a9a9b0" stroke-width="1.45" fill="none" stroke-linejoin="round"/></svg>
<div class="a" style="left:558.6px;top:723.732px;font-family:'Liberation Sans',sans-serif;font-size:14.7px;line-height:20px;color:#ededed;font-weight:400;letter-spacing:0px;;-webkit-text-stroke:0.12px #ededed">package.json</div>
<svg style="left:536.25px;top:754.4879999999999px;" width="16" height="17" viewBox="0 0 16 17"><path d="M9.3 1.5 H3.8 Q2.75 1.5 2.75 2.9 V14.6 Q2.75 16 4.1 16 H12.6 Q13.95 16 13.95 14.6 V6.1 Z" stroke="#a9a9b0" stroke-width="1.45" fill="none" stroke-linejoin="round"/><path d="M8.6 1.7 V5.2 Q8.6 6.6 10 6.6 H13.8" stroke="#a9a9b0" stroke-width="1.45" fill="none" stroke-linejoin="round"/></svg>
<div class="a" style="left:558.6px;top:752.3879999999999px;font-family:'Liberation Sans',sans-serif;font-size:14.7px;line-height:20px;color:#ededed;font-weight:400;letter-spacing:0px;;-webkit-text-stroke:0.12px #ededed">README.md</div>
<svg style="left:536.25px;top:783.1439999999999px;" width="16" height="17" viewBox="0 0 16 17"><path d="M9.3 1.5 H3.8 Q2.75 1.5 2.75 2.9 V14.6 Q2.75 16 4.1 16 H12.6 Q13.95 16 13.95 14.6 V6.1 Z" stroke="#a9a9b0" stroke-width="1.45" fill="none" stroke-linejoin="round"/><path d="M8.6 1.7 V5.2 Q8.6 6.6 10 6.6 H13.8" stroke="#a9a9b0" stroke-width="1.45" fill="none" stroke-linejoin="round"/></svg>
<div class="a" style="left:558.6px;top:781.0439999999999px;font-family:'Liberation Sans',sans-serif;font-size:14.7px;line-height:20px;color:#ededed;font-weight:400;letter-spacing:0px;;-webkit-text-stroke:0.12px #ededed">tailwind.config.ts</div>
<svg style="left:536.25px;top:811.8px;" width="16" height="17" viewBox="0 0 16 17"><path d="M9.3 1.5 H3.8 Q2.75 1.5 2.75 2.9 V14.6 Q2.75 16 4.1 16 H12.6 Q13.95 16 13.95 14.6 V6.1 Z" stroke="#a9a9b0" stroke-width="1.45" fill="none" stroke-linejoin="round"/><path d="M8.6 1.7 V5.2 Q8.6 6.6 10 6.6 H13.8" stroke="#a9a9b0" stroke-width="1.45" fill="none" stroke-linejoin="round"/></svg>
<div class="a" style="left:558.6px;top:809.6999999999999px;font-family:'Liberation Sans',sans-serif;font-size:14.7px;line-height:20px;color:#ededed;font-weight:400;letter-spacing:0px;;-webkit-text-stroke:0.12px #ededed">tsconfig.json</div>
<div class="a" style="left:532.6px;top:907.3px;width:28.4px;height:27.7px;border-radius:7px;border:1px solid #262626;background:#0d0d0d"></div>
<svg style="left:539px;top:913px;" width="16" height="16" viewBox="0 0 24 24"><path d="M3 19V5" stroke="#f0f0f0" stroke-width="2" stroke-linecap="round"/><path d="m13 6-6 6 6 6M7 12h14" stroke="#f0f0f0" stroke-width="2" fill="none" stroke-linecap="round" stroke-linejoin="round"/></svg>
<div class="a" style="left:914.3px;top:91.6px;font-family:'Liberation Sans',sans-serif;font-size:13.8px;line-height:19px;color:#a1a1a1;font-weight:400;letter-spacing:0px;;-webkit-text-stroke:0.12px #a1a1a1">src</div>
<svg style="left:942.5px;top:98px;" width="6" height="8" viewBox="0 0 6 8"><path d="M1 0.8 L4.6 4 L1 7.2" stroke="#9a9a9a" stroke-width="1.4" fill="none" stroke-linecap="round" stroke-linejoin="round"/></svg>
<div class="a" style="left:957.7px;top:91.6px;font-family:'Liberation Sans',sans-serif;font-size:13.8px;line-height:19px;color:#a1a1a1;font-weight:400;letter-spacing:0px;;-webkit-text-stroke:0.12px #a1a1a1">lib</div>
<svg style="left:981.2px;top:98px;" width="6" height="8" viewBox="0 0 6 8"><path d="M1 0.8 L4.6 4 L1 7.2" stroke="#9a9a9a" stroke-width="1.4" fill="none" stroke-linecap="round" stroke-linejoin="round"/></svg>
<div class="a" style="left:996.3px;top:91.6px;font-family:'Liberation Sans',sans-serif;font-size:13.8px;line-height:19px;color:#a1a1a1;font-weight:400;letter-spacing:0px;;-webkit-text-stroke:0.12px #a1a1a1">db</div>
<svg style="left:1021.2px;top:98px;" width="6" height="8" viewBox="0 0 6 8"><path d="M1 0.8 L4.6 4 L1 7.2" stroke="#9a9a9a" stroke-width="1.4" fill="none" stroke-linecap="round" stroke-linejoin="round"/></svg>
<div class="a" style="left:1035.9px;top:91.6px;font-family:'Liberation Sans',sans-serif;font-size:13.8px;line-height:19px;color:#f0f0f0;font-weight:400;letter-spacing:0px;;-webkit-text-stroke:0.12px #f0f0f0">schema.ts</div>
<svg style="left:1982px;top:93px;" width="16" height="16" viewBox="0 0 24 24"><rect x="8" y="8" width="13" height="14" rx="2" stroke="#b5b5b5" stroke-width="2" fill="none" stroke-linecap="round" stroke-linejoin="round"/><path d="M4 16c-1.1 0-2-.9-2-2V4c0-1.1.9-2 2-2h10c1.1 0 2 .9 2 2" stroke="#b5b5b5" stroke-width="2" fill="none" stroke-linecap="round" stroke-linejoin="round"/></svg>
<svg style="left:2010px;top:94px;" width="16" height="16" viewBox="0 0 24 24"><path d="M12 3v12M7 10l5 5 5-5" stroke="#b5b5b5" stroke-width="2" fill="none" stroke-linecap="round" stroke-linejoin="round"/><path d="M3 15v5a1 1 0 0 0 1 1h16a1 1 0 0 0 1-1v-5" stroke="#b5b5b5" stroke-width="2" fill="none" stroke-linecap="round" stroke-linejoin="round"/></svg>
<div class="a" style="left:2024px;top:120px;width:1px;height:835px;background:#171717"></div>
<div class="a" style="left:2024px;top:120px;width:14px;height:1px;background:#171717"></div>
<div class="a" style="left:2024px;top:651px;width:14px;height:1.6px;background:#8fb0d8"></div>
<div class="a" style="left:969.3px;top:183.208px;width:1px;height:234.432px;background:#2e2e2e"></div>
<div class="a" style="left:969.3px;top:471.784px;width:1px;height:90.144px;background:#2e2e2e"></div>
<div class="a" style="right:1105.4px;top:130.1px;font-family:'Liberation Mono',monospace;font-size:13px;line-height:19px;color:#66707a;font-weight:400;letter-spacing:0px;">1</div>
<div class="a" style="left:969.6px;top:130.1px;font-family:'Liberation Mono',monospace;font-size:13px;line-height:19px;color:#ededed;font-weight:400;letter-spacing:0px;"><span style="color:#f2689b">import</span><span style="color:#ededed"> { pgTable, serial, text, decimal, timestamp, boolean, integer } </span><span style="color:#f2689b">from</span><span style="color:#ededed"> </span><span style="color:#45d882">&quot;drizzle-orm/pg-core&quot;</span></div>
<div class="a" style="right:1105.4px;top:148.136px;font-family:'Liberation Mono',monospace;font-size:13px;line-height:19px;color:#66707a;font-weight:400;letter-spacing:0px;">2</div>
<div class="a" style="right:1105.4px;top:166.172px;font-family:'Liberation Mono',monospace;font-size:13px;line-height:19px;color:#66707a;font-weight:400;letter-spacing:0px;">3</div>
<div class="a" style="left:969.6px;top:166.172px;font-family:'Liberation Mono',monospace;font-size:13px;line-height:19px;color:#ededed;font-weight:400;letter-spacing:0px;"><span style="color:#f2689b">export</span><span style="color:#ededed"> </span><span style="color:#f2689b">const</span><span style="color:#ededed"> </span><span style="color:#5aa7f8">products</span><span style="color:#ededed"> </span><span style="color:#f2689b">=</span><span style="color:#ededed"> </span><span style="color:#c472fb">pgTable</span><span style="color:#ededed">(</span><span style="color:#45d882">&quot;products&quot;</span><span style="color:#ededed">, {</span></div>
<div class="a" style="right:1105.4px;top:184.208px;font-family:'Liberation Mono',monospace;font-size:13px;line-height:19px;color:#66707a;font-weight:400;letter-spacing:0px;">4</div>
<div class="a" style="left:969.6px;top:184.208px;font-family:'Liberation Mono',monospace;font-size:13px;line-height:19px;color:#ededed;font-weight:400;letter-spacing:0px;"><span style="color:#ededed">  id: </span><span style="color:#c472fb">serial</span><span style="color:#ededed">(</span><span style="color:#45d882">&quot;id&quot;</span><span style="color:#ededed">).</span><span style="color:#c472fb">primaryKey</span><span style="color:#ededed">(),</span></div>
<div class="a" style="right:1105.4px;top:202.244px;font-family:'Liberation Mono',monospace;font-size:13px;line-height:19px;color:#66707a;font-weight:400;letter-spacing:0px;">5</div>
<div class="a" style="left:969.6px;top:202.244px;font-family:'Liberation Mono',monospace;font-size:13px;line-height:19px;color:#ededed;font-weight:400;letter-spacing:0px;"><span style="color:#ededed">  title: </span><span style="color:#c472fb">text</span><span style="color:#ededed">(</span><span style="color:#45d882">&quot;title&quot;</span><span style="color:#ededed">).</span><span style="color:#c472fb">notNull</span><span style="color:#ededed">(),</span></div>
<div class="a" style="right:1105.4px;top:220.28px;font-family:'Liberation Mono',monospace;font-size:13px;line-height:19px;color:#66707a;font-weight:400;letter-spacing:0px;">6</div>
<div class="a" style="left:969.6px;top:220.28px;font-family:'Liberation Mono',monospace;font-size:13px;line-height:19px;color:#ededed;font-weight:400;letter-spacing:0px;"><span style="color:#ededed">  description: </span><span style="color:#c472fb">text</span><span style="color:#ededed">(</span><span style="color:#45d882">&quot;description&quot;</span><span style="color:#ededed">).</span><span style="color:#c472fb">notNull</span><span style="color:#ededed">(),</span></div>
<div class="a" style="right:1105.4px;top:238.316px;font-family:'Liberation Mono',monospace;font-size:13px;line-height:19px;color:#66707a;font-weight:400;letter-spacing:0px;">7</div>
<div class="a" style="left:969.6px;top:238.316px;font-family:'Liberation Mono',monospace;font-size:13px;line-height:19px;color:#ededed;font-weight:400;letter-spacing:0px;"><span style="color:#ededed">  price: </span><span style="color:#c472fb">decimal</span><span style="color:#ededed">(</span><span style="color:#45d882">&quot;price&quot;</span><span style="color:#ededed">, { precision: </span><span style="color:#5aa7f8">10</span><span style="color:#ededed">, scale: </span><span style="color:#5aa7f8">2</span><span style="color:#ededed"> }).</span><span style="color:#c472fb">notNull</span><span style="color:#ededed">(),</span></div>
<div class="a" style="right:1105.4px;top:256.352px;font-family:'Liberation Mono',monospace;font-size:13px;line-height:19px;color:#66707a;font-weight:400;letter-spacing:0px;">8</div>
<div class="a" style="left:969.6px;top:256.352px;font-family:'Liberation Mono',monospace;font-size:13px;line-height:19px;color:#ededed;font-weight:400;letter-spacing:0px;"><span style="color:#ededed">  originalPrice: </span><span style="color:#c472fb">decimal</span><span style="color:#ededed">(</span><span style="color:#45d882">&quot;original_price&quot;</span><span style="color:#ededed">, { precision: </span><span style="color:#5aa7f8">10</span><span style="color:#ededed">, scale: </span><span style="color:#5aa7f8">2</span><span style="color:#ededed"> }),</span></div>
<div class="a" style="right:1105.4px;top:274.38800000000003px;font-family:'Liberation Mono',monospace;font-size:13px;line-height:19px;color:#66707a;font-weight:400;letter-spacing:0px;">9</div>
<div class="a" style="left:969.6px;top:274.38800000000003px;font-family:'Liberation Mono',monospace;font-size:13px;line-height:19px;color:#ededed;font-weight:400;letter-spacing:0px;"><span style="color:#ededed">  imageUrl: </span><span style="color:#c472fb">text</span><span style="color:#ededed">(</span><span style="color:#45d882">&quot;image_url&quot;</span><span style="color:#ededed">).</span><span style="color:#c472fb">notNull</span><span style="color:#ededed">(),</span></div>
<div class="a" style="right:1105.4px;top:292.424px;font-family:'Liberation Mono',monospace;font-size:13px;line-height:19px;color:#66707a;font-weight:400;letter-spacing:0px;">10</div>
<div class="a" style="left:969.6px;top:292.424px;font-family:'Liberation Mono',monospace;font-size:13px;line-height:19px;color:#ededed;font-weight:400;letter-spacing:0px;"><span style="color:#ededed">  downloadUrl: </span><span style="color:#c472fb">text</span><span style="color:#ededed">(</span><span style="color:#45d882">&quot;download_url&quot;</span><span style="color:#ededed">).</span><span style="color:#c472fb">notNull</span><span style="color:#ededed">(),</span></div>
<div class="a" style="right:1105.4px;top:310.46000000000004px;font-family:'Liberation Mono',monospace;font-size:13px;line-height:19px;color:#66707a;font-weight:400;letter-spacing:0px;">11</div>
<div class="a" style="left:969.6px;top:310.46000000000004px;font-family:'Liberation Mono',monospace;font-size:13px;line-height:19px;color:#ededed;font-weight:400;letter-spacing:0px;"><span style="color:#ededed">  category: </span><span style="color:#c472fb">text</span><span style="color:#ededed">(</span><span style="color:#45d882">&quot;category&quot;</span><span style="color:#ededed">).</span><span style="color:#c472fb">notNull</span><span style="color:#ededed">(),</span></div>
<div class="a" style="right:1105.4px;top:328.496px;font-family:'Liberation Mono',monospace;font-size:13px;line-height:19px;color:#66707a;font-weight:400;letter-spacing:0px;">12</div>
<div class="a" style="left:969.6px;top:328.496px;font-family:'Liberation Mono',monospace;font-size:13px;line-height:19px;color:#ededed;font-weight:400;letter-spacing:0px;"><span style="color:#ededed">  tags: </span><span style="color:#c472fb">text</span><span style="color:#ededed">(</span><span style="color:#45d882">&quot;tags&quot;</span><span style="color:#ededed">).</span><span style="color:#c472fb">array</span><span style="color:#ededed">(),</span></div>
<div class="a" style="right:1105.4px;top:346.53200000000004px;font-family:'Liberation Mono',monospace;font-size:13px;line-height:19px;color:#66707a;font-weight:400;letter-spacing:0px;">13</div>
<div class="a" style="left:969.6px;top:346.53200000000004px;font-family:'Liberation Mono',monospace;font-size:13px;line-height:19px;color:#ededed;font-weight:400;letter-spacing:0px;"><span style="color:#ededed">  featured: </span><span style="color:#c472fb">boolean</span><span style="color:#ededed">(</span><span style="color:#45d882">&quot;featured&quot;</span><span style="color:#ededed">).</span><span style="color:#c472fb">default</span><span style="color:#ededed">(</span><span style="color:#5aa7f8">false</span><span style="color:#ededed">),</span></div>
<div class="a" style="right:1105.4px;top:364.568px;font-family:'Liberation Mono',monospace;font-size:13px;line-height:19px;color:#66707a;font-weight:400;letter-spacing:0px;">14</div>
<div class="a" style="left:969.6px;top:364.568px;font-family:'Liberation Mono',monospace;font-size:13px;line-height:19px;color:#ededed;font-weight:400;letter-spacing:0px;"><span style="color:#ededed">  downloads: </span><span style="color:#c472fb">integer</span><span style="color:#ededed">(</span><span style="color:#45d882">&quot;downloads&quot;</span><span style="color:#ededed">).</span><span style="color:#c472fb">default</span><span style="color:#ededed">(</span><span style="color:#5aa7f8">0</span><span style="color:#ededed">),</span></div>
<div class="a" style="right:1105.4px;top:382.60400000000004px;font-family:'Liberation Mono',monospace;font-size:13px;line-height:19px;color:#66707a;font-weight:400;letter-spacing:0px;">15</div>
<div class="a" style="left:969.6px;top:382.60400000000004px;font-family:'Liberation Mono',monospace;font-size:13px;line-height:19px;color:#ededed;font-weight:400;letter-spacing:0px;"><span style="color:#ededed">  createdAt: </span><span style="color:#c472fb">timestamp</span><span style="color:#ededed">(</span><span style="color:#45d882">&quot;created_at&quot;</span><span style="color:#ededed">).</span><span style="color:#c472fb">defaultNow</span><span style="color:#ededed">(),</span></div>
<div class="a" style="right:1105.4px;top:400.64px;font-family:'Liberation Mono',monospace;font-size:13px;line-height:19px;color:#66707a;font-weight:400;letter-spacing:0px;">16</div>
<div class="a" style="left:969.6px;top:400.64px;font-family:'Liberation Mono',monospace;font-size:13px;line-height:19px;color:#ededed;font-weight:400;letter-spacing:0px;"><span style="color:#ededed">  updatedAt: </span><span style="color:#c472fb">timestamp</span><span style="color:#ededed">(</span><span style="color:#45d882">&quot;updated_at&quot;</span><span style="color:#ededed">).</span><span style="color:#c472fb">defaultNow</span><span style="color:#ededed">(),</span></div>
<div class="a" style="right:1105.4px;top:418.67600000000004px;font-family:'Liberation Mono',monospace;font-size:13px;line-height:19px;color:#66707a;font-weight:400;letter-spacing:0px;">17</div>
<div class="a" style="left:969.6px;top:418.67600000000004px;font-family:'Liberation Mono',monospace;font-size:13px;line-height:19px;color:#ededed;font-weight:400;letter-spacing:0px;"><span style="color:#ededed">})</span></div>
<div class="a" style="right:1105.4px;top:436.712px;font-family:'Liberation Mono',monospace;font-size:13px;line-height:19px;color:#66707a;font-weight:400;letter-spacing:0px;">18</div>
<div class="a" style="right:1105.4px;top:454.74800000000005px;font-family:'Liberation Mono',monospace;font-size:13px;line-height:19px;color:#66707a;font-weight:400;letter-spacing:0px;">19</div>
<div class="a" style="left:969.6px;top:454.74800000000005px;font-family:'Liberation Mono',monospace;font-size:13px;line-height:19px;color:#ededed;font-weight:400;letter-spacing:0px;"><span style="color:#f2689b">export</span><span style="color:#ededed"> </span><span style="color:#f2689b">const</span><span style="color:#ededed"> </span><span style="color:#5aa7f8">categories</span><span style="color:#ededed"> </span><span style="color:#f2689b">=</span><span style="color:#ededed"> </span><span style="color:#c472fb">pgTable</span><span style="color:#ededed">(</span><span style="color:#45d882">&quot;categories&quot;</span><span style="color:#ededed">, {</span></div>
<div class="a" style="right:1105.4px;top:472.784px;font-family:'Liberation Mono',monospace;font-size:13px;line-height:19px;color:#66707a;font-weight:400;letter-spacing:0px;">20</div>
<div class="a" style="left:969.6px;top:472.784px;font-family:'Liberation Mono',monospace;font-size:13px;line-height:19px;color:#ededed;font-weight:400;letter-spacing:0px;"><span style="color:#ededed">  id: </span><span style="color:#c472fb">serial</span><span style="color:#ededed">(</span><span style="color:#45d882">&quot;id&quot;</span><span style="color:#ededed">).</span><span style="color:#c472fb">primaryKey</span><span style="color:#ededed">(),</span></div>
<div class="a" style="right:1105.4px;top:490.82000000000005px;font-family:'Liberation Mono',monospace;font-size:13px;line-height:19px;color:#66707a;font-weight:400;letter-spacing:0px;">21</div>
<div class="a" style="left:969.6px;top:490.82000000000005px;font-family:'Liberation Mono',monospace;font-size:13px;line-height:19px;color:#ededed;font-weight:400;letter-spacing:0px;"><span style="color:#ededed">  name: </span><span style="color:#c472fb">text</span><span style="color:#ededed">(</span><span style="color:#45d882">&quot;name&quot;</span><span style="color:#ededed">).</span><span style="color:#c472fb">notNull</span><span style="color:#ededed">(),</span></div>
<div class="a" style="right:1105.4px;top:508.856px;font-family:'Liberation Mono',monospace;font-size:13px;line-height:19px;color:#66707a;font-weight:400;letter-spacing:0px;">22</div>
<div class="a" style="left:969.6px;top:508.856px;font-family:'Liberation Mono',monospace;font-size:13px;line-height:19px;color:#ededed;font-weight:400;letter-spacing:0px;"><span style="color:#ededed">  slug: </span><span style="color:#c472fb">text</span><span style="color:#ededed">(</span><span style="color:#45d882">&quot;slug&quot;</span><span style="color:#ededed">).</span><span style="color:#c472fb">notNull</span><span style="color:#ededed">(),</span></div>
<div class="a" style="right:1105.4px;top:526.892px;font-family:'Liberation Mono',monospace;font-size:13px;line-height:19px;color:#66707a;font-weight:400;letter-spacing:0px;">23</div>
<div class="a" style="left:969.6px;top:526.892px;font-family:'Liberation Mono',monospace;font-size:13px;line-height:19px;color:#ededed;font-weight:400;letter-spacing:0px;"><span style="color:#ededed">  description: </span><span style="color:#c472fb">text</span><span style="color:#ededed">(</span><span style="color:#45d882">&quot;description&quot;</span><span style="color:#ededed">),</span></div>
<div class="a" style="right:1105.4px;top:544.928px;font-family:'Liberation Mono',monospace;font-size:13px;line-height:19px;color:#66707a;font-weight:400;letter-spacing:0px;">24</div>
<div class="a" style="left:969.6px;top:544.928px;font-family:'Liberation Mono',monospace;font-size:13px;line-height:19px;color:#ededed;font-weight:400;letter-spacing:0px;"><span style="color:#ededed">  createdAt: </span><span style="color:#c472fb">timestamp</span><span style="color:#ededed">(</span><span style="color:#45d882">&quot;created_at&quot;</span><span style="color:#ededed">).</span><span style="color:#c472fb">defaultNow</span><span style="color:#ededed">(),</span></div>
<div class="a" style="right:1105.4px;top:562.964px;font-family:'Liberation Mono',monospace;font-size:13px;line-height:19px;color:#66707a;font-weight:400;letter-spacing:0px;">25</div>
<div class="a" style="left:969.6px;top:562.964px;font-family:'Liberation Mono',monospace;font-size:13px;line-height:19px;color:#ededed;font-weight:400;letter-spacing:0px;"><span style="color:#ededed">})</span></div>
<div class="a" style="right:1105.4px;top:581.0px;font-family:'Liberation Mono',monospace;font-size:13px;line-height:19px;color:#66707a;font-weight:400;letter-spacing:0px;">26</div>
<div class="a" style="right:1105.4px;top:599.0360000000001px;font-family:'Liberation Mono',monospace;font-size:13px;line-height:19px;color:#66707a;font-weight:400;letter-spacing:0px;">27</div>
<div class="a" style="left:969.6px;top:599.0360000000001px;font-family:'Liberation Mono',monospace;font-size:13px;line-height:19px;color:#ededed;font-weight:400;letter-spacing:0px;"><span style="color:#f2689b">export</span><span style="color:#ededed"> </span><span style="color:#f2689b">type</span><span style="color:#ededed"> </span><span style="color:#c472fb">Product</span><span style="color:#ededed"> </span><span style="color:#f2689b">=</span><span style="color:#ededed"> </span><span style="color:#f2689b">typeof</span><span style="color:#ededed"> products.$inferSelect</span></div>
<div class="a" style="right:1105.4px;top:617.072px;font-family:'Liberation Mono',monospace;font-size:13px;line-height:19px;color:#66707a;font-weight:400;letter-spacing:0px;">28</div>
<div class="a" style="left:969.6px;top:617.072px;font-family:'Liberation Mono',monospace;font-size:13px;line-height:19px;color:#ededed;font-weight:400;letter-spacing:0px;"><span style="color:#f2689b">export</span><span style="color:#ededed"> </span><span style="color:#f2689b">type</span><span style="color:#ededed"> </span><span style="color:#c472fb">NewProduct</span><span style="color:#ededed"> </span><span style="color:#f2689b">=</span><span style="color:#ededed"> </span><span style="color:#f2689b">typeof</span><span style="color:#ededed"> products.$inferInsert</span></div>
<div class="a" style="right:1105.4px;top:635.1080000000001px;font-family:'Liberation Mono',monospace;font-size:13px;line-height:19px;color:#66707a;font-weight:400;letter-spacing:0px;">29</div>
<div class="a" style="left:969.6px;top:635.1080000000001px;font-family:'Liberation Mono',monospace;font-size:13px;line-height:19px;color:#ededed;font-weight:400;letter-spacing:0px;"><span style="color:#f2689b">export</span><span style="color:#ededed"> </span><span style="color:#f2689b">type</span><span style="color:#ededed"> </span><span style="color:#c472fb">Category</span><span style="color:#ededed"> </span><span style="color:#f2689b">=</span><span style="color:#ededed"> </span><span style="color:#f2689b">typeof</span><span style="color:#ededed"> categories.$inferSelect</span></div>
<div class="a" style="right:1105.4px;top:653.1440000000001px;font-family:'Liberation Mono',monospace;font-size:13px;line-height:19px;color:#363b40;font-weight:400;letter-spacing:0px;">30</div>
<div class="a" style="left:0px;top:0px;width:2.8px;height:945px;background:#3b3b3b"></div>
<div class="a" style="left:2046.5px;top:0px;width:1.5px;height:945px;background:#555"></div>
<div class="a" style="left:0px;top:944px;width:2048px;height:1px;background:#5e5e5e"></div>
</body></html>
